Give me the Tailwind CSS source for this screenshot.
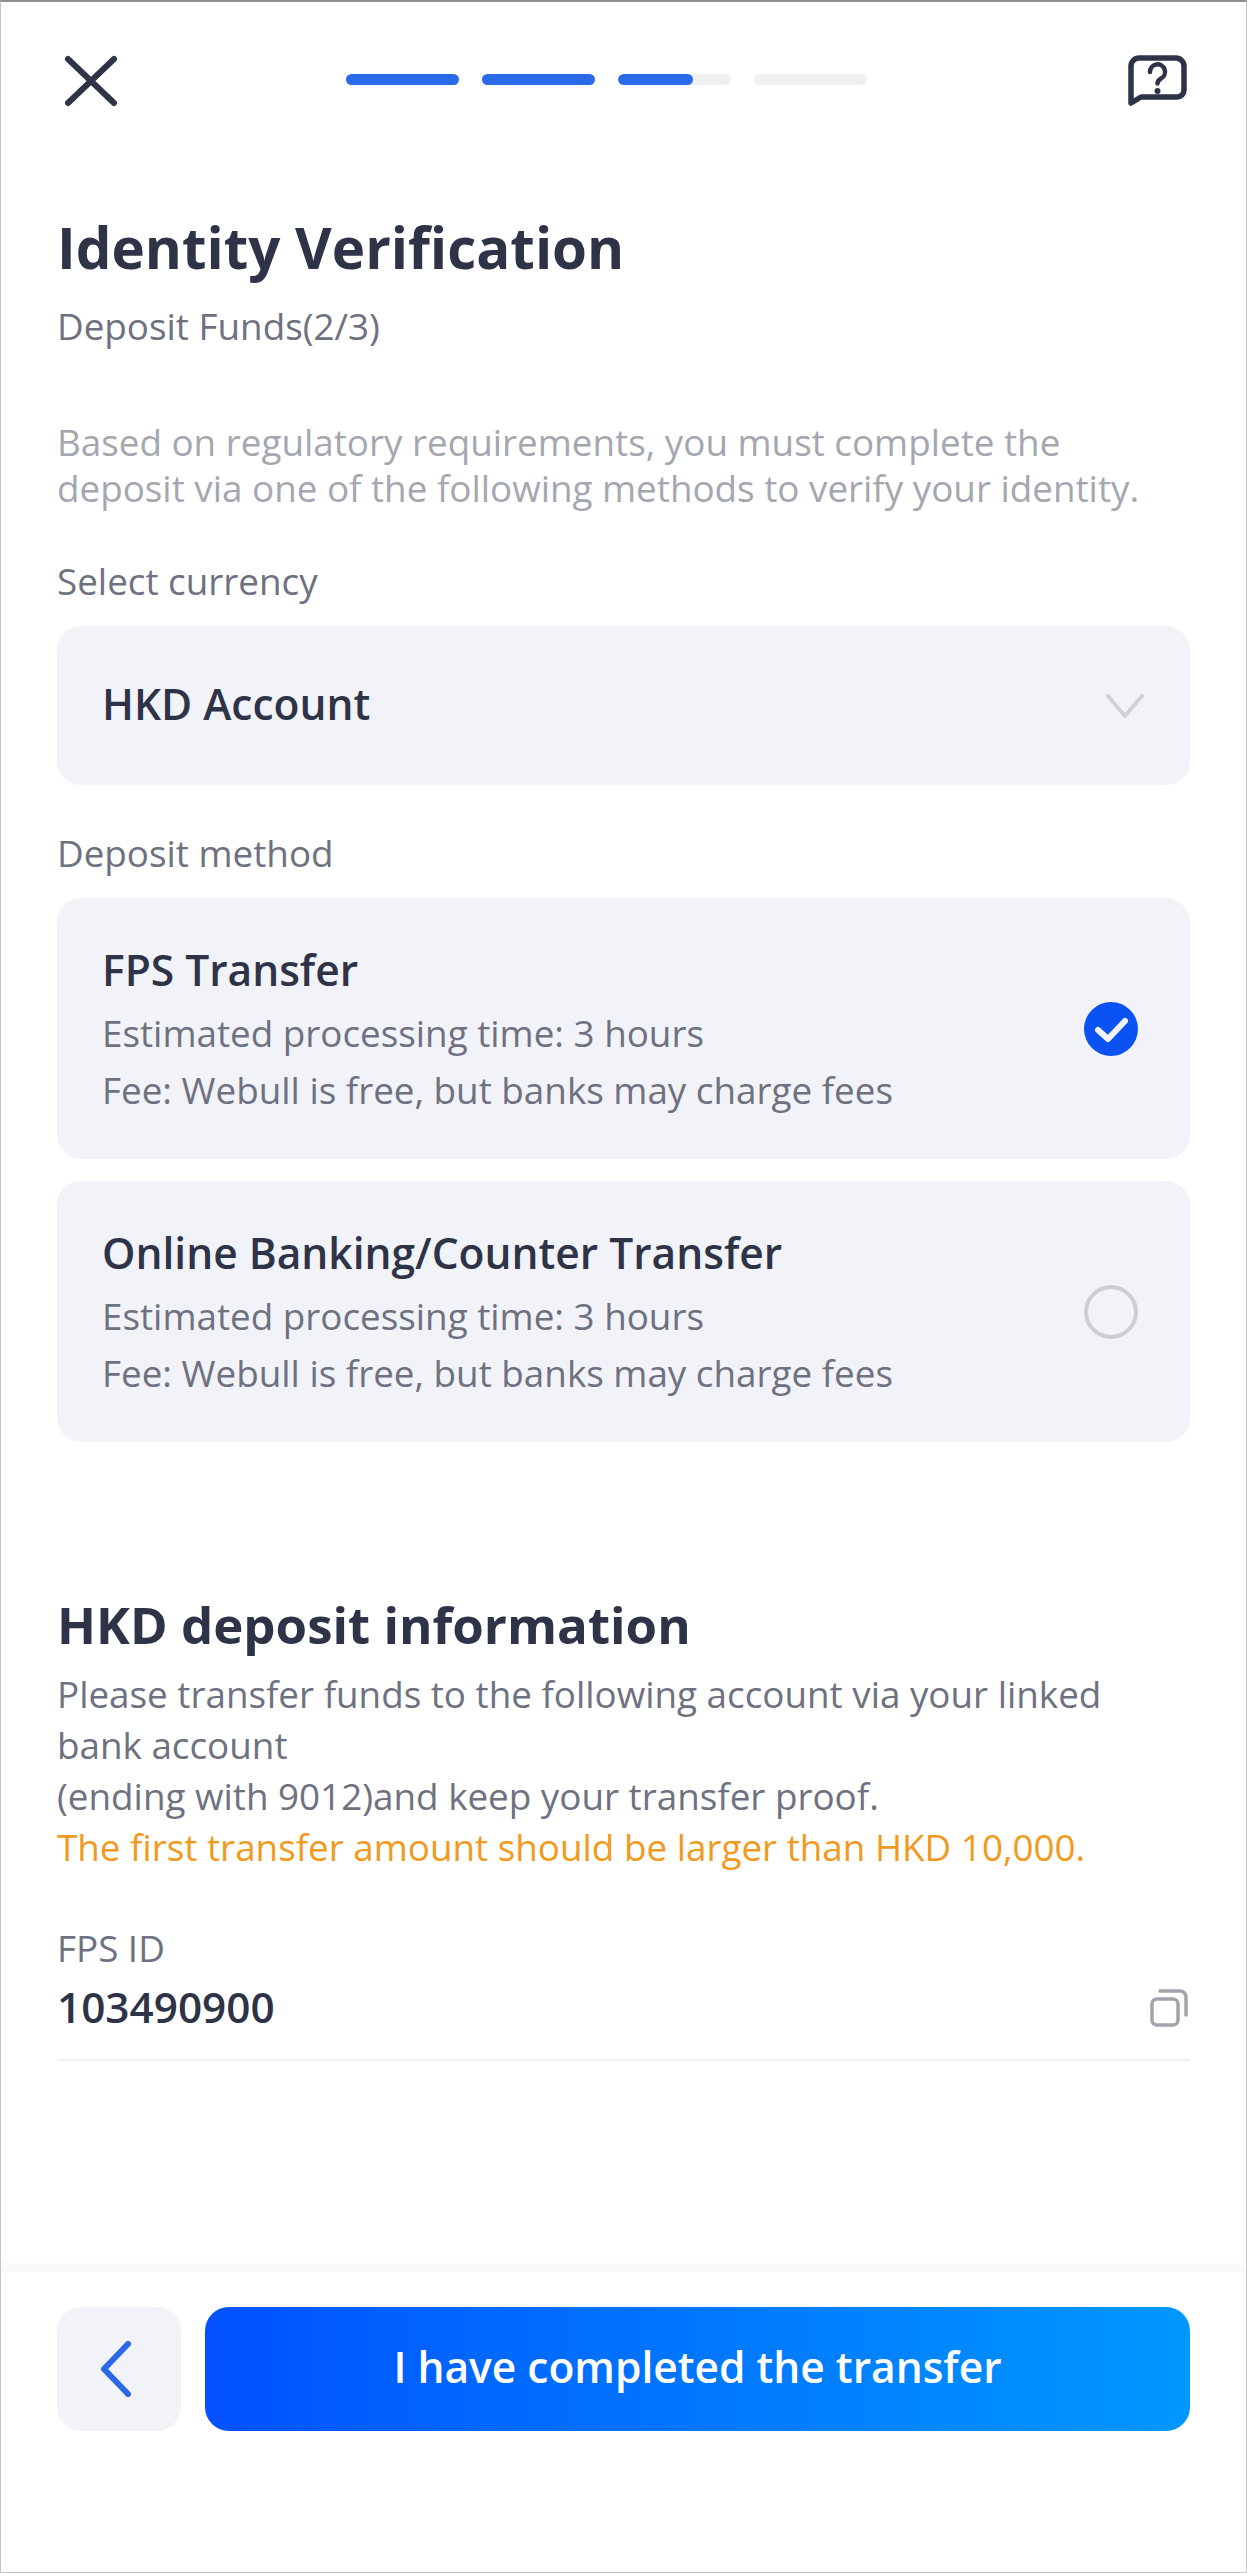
<!DOCTYPE html>
<html><head><meta charset="utf-8"><script src="https://cdn.jsdelivr.net/npm/@tailwindcss/browser@4"></script></head>
<body class="m-0 bg-white">
<div class="relative flex flex-col h-[2573px] w-[1247px] border border-[#c4c4c4] border-t-2 border-t-[#8f8f8f] bg-white font-['Open_Sans',sans-serif] overflow-hidden">
  <header class="relative h-[211px] shrink-0">
    <svg class="absolute left-[62px] top-[52px]" width="56" height="54" viewBox="0 0 56 54" fill="none" stroke="#2e3347" stroke-width="6" stroke-linecap="round"><path d="M5 5 L51 49 M51 5 L5 49"/></svg>
    <div class="absolute left-[345px] top-[72px] flex gap-[23px]">
      <div class="w-[113px] h-[11px] rounded-full bg-[#2a6ae9]"></div>
      <div class="w-[113px] h-[11px] rounded-full bg-[#2a6ae9]"></div>
      <div class="w-[113px] h-[11px] rounded-full bg-[#eff0f2] overflow-hidden"><div class="w-[75px] h-full rounded-full bg-[#2a6ae9]"></div></div>
      <div class="w-[113px] h-[11px] rounded-full bg-[#eff0f2]"></div>
    </div>
    <svg class="absolute left-[1126px] top-[52px]" width="60" height="54" viewBox="0 0 60 54" fill="none" stroke="#2e3347" stroke-linecap="round" stroke-linejoin="round"><path stroke-width="5.500" d="M4 49 V12 a8 8 0 0 1 8-8 H49 a8 8 0 0 1 8 8 V36 a7 7 0 0 1-7 7 H14 Z"/><path stroke-width="4.500" d="M23 18 a7.500 7.500 0 1 1 11 6.500 c-2.500 1.500-3.500 3-3.500 5"/><circle cx="30.500" cy="37" r="3" fill="#2e3347" stroke="none"/></svg>
  </header>
  <main class="px-[56px] flex-1">
    <h1 class="text-[56.500px] leading-[70px] font-bold text-[#2e3347]">Identity Verification</h1>
    <p class="mt-[18px] text-[36.800px] leading-[50px] text-[#6e7180]">Deposit Funds(2/3)</p>
    <p class="mt-[68px] text-[36.800px] leading-[46px] text-[#a5a7b0]">Based on regulatory requirements, you must complete the deposit via one of the following methods to verify your identity.</p>
    <p class="mt-[45px] text-[36.800px] leading-[50px] text-[#6e7180]">Select currency</p>
    <div class="mt-[20px] h-[159px] rounded-[24px] bg-[#f2f3f9] flex items-center justify-between pl-[45px] pr-[46px]">
      <span class="pb-[3px] text-[42.500px] font-semibold text-[#2e3347]">HKD Account</span>
      <svg width="38" height="26" viewBox="0 0 38 26" fill="none" stroke="#cfd1d6" stroke-width="4" stroke-linecap="round" stroke-linejoin="round"><path d="M2 3 L19 23 L36 3"/></svg>
    </div>
    <p class="mt-[43px] text-[36.800px] leading-[50px] text-[#6e7180]">Deposit method</p>
    <div class="mt-[20px] h-[261px] rounded-[24px] bg-[#f2f3f9] flex items-center justify-between pl-[45px] pr-[52px]">
      <div class="pt-[1px]">
        <p class="text-[42.500px] leading-[60px] font-semibold text-[#2e3347]">FPS Transfer</p>
        <p class="mt-[5px] text-[36.800px] leading-[57px] text-[#6e7180]">Estimated processing time: 3 hours</p>
        <p class="text-[36.800px] leading-[57px] text-[#6e7180]">Fee: Webull is free, but banks may charge fees</p>
      </div>
      <svg width="54" height="54" viewBox="0 0 54 54"><circle cx="27" cy="27" r="27" fill="#0b52f4"/><path d="M14 28 L24 37 L41 19" fill="none" stroke="#f2f3f9" stroke-width="6" stroke-linecap="round" stroke-linejoin="round"/></svg>
    </div>
    <div class="mt-[22px] h-[261px] rounded-[24px] bg-[#f2f3f9] flex items-center justify-between pl-[45px] pr-[52px]">
      <div class="pt-[1px]">
        <p class="text-[42.500px] leading-[60px] font-semibold text-[#2e3347]">Online Banking/Counter Transfer</p>
        <p class="mt-[5px] text-[36.800px] leading-[57px] text-[#6e7180]">Estimated processing time: 3 hours</p>
        <p class="text-[36.800px] leading-[57px] text-[#6e7180]">Fee: Webull is free, but banks may charge fees</p>
      </div>
      <svg width="54" height="54" viewBox="0 0 54 54"><circle cx="27" cy="27" r="25" fill="none" stroke="#cdced3" stroke-width="4"/></svg>
    </div>
    <h2 class="mt-[147px] text-[51px] leading-[70px] font-bold text-[#2e3347]">HKD deposit information</h2>
    <div class="mt-[10px] text-[36.800px] leading-[51px] text-[#6e7180]">
      <p>Please transfer funds to the following account via your linked bank account</p>
      <p>(ending with 9012)and keep your transfer proof.</p>
      <p class="text-[#f09a1e]">The first transfer amount should be larger than HKD 10,000.</p>
    </div>
    <p class="mt-[50px] text-[36.800px] leading-[50px] text-[#6e7180]">FPS ID</p>
    <div class="mt-[4px] h-[84px] pb-[23px] border-b-2 border-[#f0f1f3] flex items-center justify-between">
      <span class="text-[42.300px] leading-[60px] font-semibold text-[#2e3347]">103490900</span>
      <svg class="mr-[2px] mt-[3px]" width="38" height="38" viewBox="0 0 38 38" fill="none" stroke="#a2a4ab" stroke-width="3.500" stroke-linecap="round" stroke-linejoin="round"><rect x="2" y="10" width="26" height="26" rx="5"/><path d="M10 2 H30 a6 6 0 0 1 6 6 V26"/></svg>
    </div>
  </main>
  <footer class="relative shrink-0 pt-[35px] pb-[141px] px-[56px] flex gap-[24px] bg-white before:absolute before:left-0 before:right-0 before:top-[-16px] before:h-[16px] before:bg-gradient-to-b before:from-white before:to-[#f8f8f9]">
    <div class="w-[124px] h-[124px] rounded-[24px] bg-[#f2f3f9] flex items-center justify-center pr-[6px]">
      <svg width="34" height="56" viewBox="0 0 34 56" fill="none" stroke="#2a6ae9" stroke-width="6" stroke-linecap="round" stroke-linejoin="round"><path d="M29 3 L5 28 L29 53"/></svg>
    </div>
    <button class="flex-1 h-[124px] pb-[5px] rounded-[24px] bg-gradient-to-r from-[#0550ff] to-[#0097ff] text-white text-[42.500px] font-semibold">I have completed the transfer</button>
  </footer>
</div>
</body></html>
